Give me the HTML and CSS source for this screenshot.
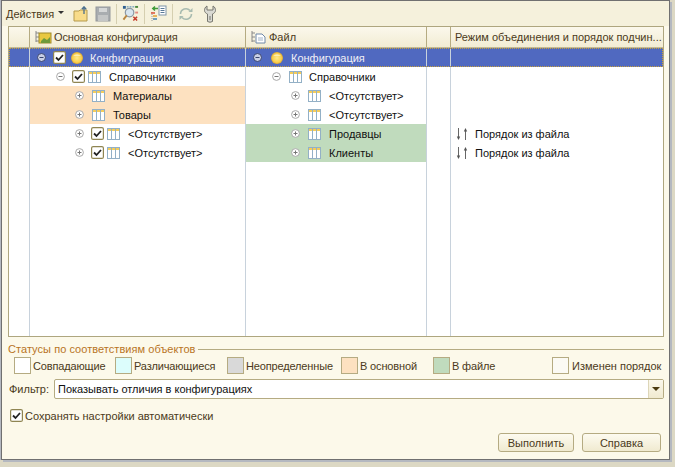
FILE: index.html
```html
<!DOCTYPE html>
<html>
<head>
    <meta charset="UTF-8">
    <title>Объединение конфигураций</title>
    <link rel="stylesheet" href="styles.css">
</head>
<body>
    <svg class="defs" width="0" height="0">
        <defs>
            <radialGradient id="ballFill" cx="50%" cy="50%" r="56%">
                <stop offset="0" stop-color="#ffe98a"/>
                <stop offset="0.65" stop-color="#f9cf4e"/>
                <stop offset="1" stop-color="#cf9226"/>
            </radialGradient>
            <symbol id="i-table" viewBox="0 0 13 12">
                <rect x="0.5" y="0.5" width="12" height="11" fill="#fff" stroke="#93b0c6"/>
                <rect x="1" y="1" width="11" height="2" fill="#f5cd5a"/>
                <path d="M4.5 1v10M8.5 1v10" stroke="#93b0c6" fill="none"/>
            </symbol>
            <symbol id="i-ball" viewBox="0 0 12 12">
                <circle cx="6" cy="6" r="6" fill="url(#ballFill)"/>
                <path d="M2.2 4a4.2 3 0 0 1 7.600 0z" fill="#fff" opacity="0.5"/>
            </symbol>
            <symbol id="i-plus" viewBox="0 0 9 9">
                <circle cx="4.5" cy="4.5" r="3.9" fill="#fff" stroke="#a8a8a8"/>
                <path d="M2.5 4.5h4M4.5 2.5v4" stroke="#777"/>
            </symbol>
            <symbol id="i-minus" viewBox="0 0 9 9">
                <circle cx="4.5" cy="4.5" r="3.9" fill="#fff" stroke="#a8a8a8"/>
                <path d="M2.5 4.5h4" stroke="#777"/>
            </symbol>
            <symbol id="i-minus-sel" viewBox="0 0 9 9">
                <circle cx="4.5" cy="4.5" r="4" fill="#c9cfe6" stroke="#39456f"/>
                <path d="M2.5 4.5h4" stroke="#39456f"/>
            </symbol>
            <symbol id="i-check" viewBox="0 0 13 13">
                <rect x="0.6" y="0.6" width="11.800" height="11.800" rx="1.5" fill="#fff" stroke="#8f8552" stroke-width="1.200"/>
                <path d="M3 6.500l2.500 2.500l4.500-5" fill="none" stroke="#222" stroke-width="1.800"/>
            </symbol>
            <symbol id="i-order" viewBox="0 0 12 12">
                <path d="M2.500 0v9" stroke="#666" fill="none"/>
                <path d="M0.800 8.500h3.400L2.500 12z" fill="#555"/>
                <path d="M9.500 12V3" stroke="#666" fill="none"/>
                <path d="M7.800 3.500h3.400L9.500 0z" fill="#555"/>
            </symbol>
        </defs>
    </svg>

    <div class="dialog">
        <div class="toolbar">
            <span class="menu">Действия</span>
            <span class="menu-arrow"></span>
            <!-- папка -->
            <svg class="tool tool-first" width="16" height="16" viewBox="0 0 16 16">
                <path d="M1 5h5l1-1h7v11H1z" fill="#f8dc8a" stroke="#b59a4c"/>
                <path d="M11 8V1M8.800 3.200L11 .8l2.200 2.400" fill="none" stroke="#4a6f8e" stroke-width="1.300"/>
            </svg>
            <!-- сохранить, неактивно -->
            <svg class="tool" width="16" height="16" viewBox="0 0 16 16">
                <rect x="1" y="1" width="14" height="14" fill="#a9adb0" stroke="#94989b"/>
                <rect x="4" y="2" width="8" height="4" fill="#d5d7d7"/>
                <rect x="3" y="9" width="10" height="6" fill="#c4c6c6"/>
            </svg>
            <span class="tool-sep"></span>
            <svg class="tool" width="17" height="17" viewBox="0 0 18 18">
                <path d="M2 2h14" stroke="#3f7fb0" stroke-dasharray="2 1"/>
                <rect x="1" y="1" width="3" height="3" fill="#2f5f90"/>
                <rect x="14" y="1" width="3" height="2" fill="#4d8a3c"/>
                <circle cx="8" cy="8" r="4.500" fill="#d8e6ef" stroke="#8b98a5" stroke-width="1.300"/>
                <path d="M5 11l-3.500 4.500" stroke="#b9863f" stroke-width="2"/>
                <path d="M12 12.500l4 4M16 12.500l-4 4" stroke="#c43a2a" stroke-width="1.600"/>
                <rect x="14" y="7" width="3" height="2" fill="#e08a80"/>
            </svg>
            <span class="tool-sep"></span>
            <svg class="tool" width="17" height="17" viewBox="0 0 17 17">
                <rect x="9" y="1" width="7" height="9" fill="#fff" stroke="#7f95a8"/>
                <path d="M10.500 3.500h4M10.500 5.500h4M10.500 7.500h4" stroke="#5a7a98"/>
                <path d="M8 3.500H3M5 1.500L2.800 3.500L5 5.500" fill="none" stroke="#3f9a3a" stroke-width="1.500"/>
                <path d="M2 7v9" stroke="#999" stroke-dasharray="1 1"/>
                <path d="M1 8h4" stroke="#d8503a" stroke-width="1.500"/>
                <path d="M3 11h4" stroke="#e0a030" stroke-width="1.500"/>
                <path d="M3 14h4" stroke="#3f7fb0" stroke-width="1.500"/>
            </svg>
            <span class="tool-sep"></span>
            <svg class="tool" width="16" height="16" viewBox="0 0 16 16">
                <path d="M2.500 8a5.500 5.500 0 0 1 9.500-3.500" fill="none" stroke="#a8bbb0" stroke-width="1.600"/>
                <path d="M13.500 8a5.500 5.500 0 0 1-9.500 3.500" fill="none" stroke="#a8bbb0" stroke-width="1.600"/>
                <path d="M10.500 6h4V2zM5.500 10h-4v4z" fill="#a8bbb0"/>
            </svg>
            <svg class="tool tool-wrench" width="12" height="18" viewBox="0 0 12 18">
                <path d="M3 1v4h6V1c2 1 2.500 3 2.500 4.500S10 8.500 8.500 9v7.500q-2.500 1.500-5 0V9C2 8.500.500 7 .500 5.500S1 2 3 1z" fill="#d9d9d2" stroke="#77776f"/>
                <path d="M6 11v4" stroke="#77776f"/>
            </svg>
        </div>

        <div class="tree">
            <div class="row row-head">
                <div class="cell"></div>
                <div class="cell head-main">
                    <svg class="head-icon" width="17" height="14" viewBox="0 0 17 14">
                        <path d="M1 1v11M1 3h3M1 7h3M1 11h3" stroke="#888" fill="none"/>
                        <rect x="4" y="3" width="12" height="10" fill="#e8c840" stroke="#a08a28"/>
                        <path d="M6 11l3-3l3 2l3-3v6H6z" fill="#6f9a3a"/>
                    </svg>
                    <span>Основная конфигурация</span>
                </div>
                <div class="cell head-file">
                    <svg class="head-icon" width="16" height="14" viewBox="0 0 16 14">
                        <path d="M1 1v11M1 3h3M1 7h3M1 11h3" stroke="#888" fill="none"/>
                        <path d="M5 4h6l3 3v6H5z" fill="#fff" stroke="#6f88a8"/>
                        <path d="M7 8h5M7 10h5" stroke="#9fb2c8"/>
                    </svg>
                    <span>Файл</span>
                </div>
                <div class="cell"></div>
                <div class="cell head-mode"><span>Режим объединения и порядок подчин...</span></div>
            </div>

            <div class="rows">
                <div class="row row-selected">
                    <div class="cell"></div>
                    <div class="cell lvl-0">
                        <svg class="exp"><use href="#i-minus-sel"/></svg>
                        <svg class="chk"><use href="#i-check"/></svg>
                        <svg class="ball"><use href="#i-ball"/></svg>
                        <span class="name">Конфигурация</span>
                    </div>
                    <div class="cell lvl-f0">
                        <svg class="exp"><use href="#i-minus-sel"/></svg>
                        <svg class="ball"><use href="#i-ball"/></svg>
                        <span class="name">Конфигурация</span>
                    </div>
                    <div class="cell"></div>
                    <div class="cell"></div>
                </div>

                <div class="row">
                    <div class="cell"></div>
                    <div class="cell lvl-1">
                        <svg class="exp"><use href="#i-minus"/></svg>
                        <svg class="chk"><use href="#i-check"/></svg>
                        <svg class="tbl"><use href="#i-table"/></svg>
                        <span class="name">Справочники</span>
                    </div>
                    <div class="cell lvl-f1">
                        <svg class="exp"><use href="#i-minus"/></svg>
                        <svg class="tbl"><use href="#i-table"/></svg>
                        <span class="name">Справочники</span>
                    </div>
                    <div class="cell"></div>
                    <div class="cell"></div>
                </div>

                <div class="row">
                    <div class="cell"></div>
                    <div class="cell lvl-2 bg-main">
                        <svg class="exp"><use href="#i-plus"/></svg>
                        <svg class="tbl"><use href="#i-table"/></svg>
                        <span class="name">Материалы</span>
                    </div>
                    <div class="cell lvl-f2">
                        <svg class="exp"><use href="#i-plus"/></svg>
                        <svg class="tbl"><use href="#i-table"/></svg>
                        <span class="name">&lt;Отсутствует&gt;</span>
                    </div>
                    <div class="cell"></div>
                    <div class="cell"></div>
                </div>

                <div class="row">
                    <div class="cell"></div>
                    <div class="cell lvl-2 bg-main">
                        <svg class="exp"><use href="#i-plus"/></svg>
                        <svg class="tbl"><use href="#i-table"/></svg>
                        <span class="name">Товары</span>
                    </div>
                    <div class="cell lvl-f2">
                        <svg class="exp"><use href="#i-plus"/></svg>
                        <svg class="tbl"><use href="#i-table"/></svg>
                        <span class="name">&lt;Отсутствует&gt;</span>
                    </div>
                    <div class="cell"></div>
                    <div class="cell"></div>
                </div>

                <div class="row">
                    <div class="cell"></div>
                    <div class="cell lvl-2">
                        <svg class="exp"><use href="#i-plus"/></svg>
                        <svg class="chk"><use href="#i-check"/></svg>
                        <svg class="tbl"><use href="#i-table"/></svg>
                        <span class="name">&lt;Отсутствует&gt;</span>
                    </div>
                    <div class="cell lvl-f2 bg-file">
                        <svg class="exp"><use href="#i-plus"/></svg>
                        <svg class="tbl"><use href="#i-table"/></svg>
                        <span class="name">Продавцы</span>
                    </div>
                    <div class="cell"></div>
                    <div class="cell order">
                        <svg class="ord"><use href="#i-order"/></svg>
                        <span>Порядок из файла</span>
                    </div>
                </div>

                <div class="row">
                    <div class="cell"></div>
                    <div class="cell lvl-2">
                        <svg class="exp"><use href="#i-plus"/></svg>
                        <svg class="chk"><use href="#i-check"/></svg>
                        <svg class="tbl"><use href="#i-table"/></svg>
                        <span class="name">&lt;Отсутствует&gt;</span>
                    </div>
                    <div class="cell lvl-f2 bg-file">
                        <svg class="exp"><use href="#i-plus"/></svg>
                        <svg class="tbl"><use href="#i-table"/></svg>
                        <span class="name">Клиенты</span>
                    </div>
                    <div class="cell"></div>
                    <div class="cell order">
                        <svg class="ord"><use href="#i-order"/></svg>
                        <span>Порядок из файла</span>
                    </div>
                </div>

                <div class="row row-fill">
                    <div class="cell"></div>
                    <div class="cell"></div>
                    <div class="cell"></div>
                    <div class="cell"></div>
                    <div class="cell"></div>
                </div>
            </div>
        </div>

        <div class="legend-title">
            <span>Статусы по соответствиям объектов</span>
            <i></i>
        </div>
        <div class="legend">
            <div class="item"><b class="sw sw-same"></b>Совпадающие</div>
            <div class="item"><b class="sw sw-diff"></b>Различающиеся</div>
            <div class="item"><b class="sw sw-undef"></b>Неопределенные</div>
            <div class="item"><b class="sw sw-main"></b>В основной</div>
            <div class="item"><b class="sw sw-file"></b>В файле</div>
            <div class="item"><b class="sw sw-order"></b>Изменен порядок</div>
        </div>

        <div class="filter">
            <label>Фильтр:</label>
            <div class="select">
                <span>Показывать отличия в конфигурациях</span>
                <div class="select-btn"><i></i></div>
            </div>
        </div>

        <div class="autosave">
            <svg class="chk"><use href="#i-check"/></svg>
            <span>Сохранять настройки автоматически</span>
        </div>

        <div class="buttons">
            <button class="btn btn-run">Выполнить</button>
            <button class="btn btn-help">Справка</button>
        </div>
    </div>
</body>
</html>
```

FILE: styles.css
```css
* { box-sizing: border-box; }
html, body { margin: 0; height: 467px; overflow: hidden; }
body {
    background: #dcd8c4;
    font-family: "Liberation Sans", Arial, sans-serif;
    font-size: 11px;
    color: #222;
}
.defs { display: block; height: 0; }

.dialog {
    width: 669px;
    height: 460px;
    margin-left: 1px;
    background: #fcf9ea;
    border: 1px solid #707070;
    box-shadow: -1px 0 0 #b4b8c0, 2px 2px 0 #b4b8c0;
    display: flex;
    flex-direction: column;
}

/* панель команд */
.toolbar {
    height: 25px;
    background: #f5f1dc;
    display: flex;
    align-items: center;
    padding-left: 4px;
    color: #4b3a20;
}
.menu-arrow {
    width: 0; height: 0;
    margin: -2px 0 0 4px;
    border: 3px solid transparent;
    border-top: 3px solid #333;
    border-bottom: 0;
}
.tool { margin-left: 6px; flex: none; }
.tool-first { margin-left: 9px; }
.tool-sep { width: 1px; height: 20px; background: #d5cfb0; margin-left: 5px; flex: none; }
.tool-sep + .tool { margin-left: 5px; }
.tool-wrench { margin-left: 10px; }

/* дерево */
.tree {
    margin: 0 5px 0 6px;
    height: 311px;
    border: 1px solid #aea67f;
    background: #fff;
    display: flex;
    flex-direction: column;
    flex: none;
}
.row {
    display: grid;
    grid-template-columns: 21px 216px 181px 24px 1fr;
    height: 19px;
}
.cell {
    border-right: 1px solid #c8d2dc;
    display: flex;
    align-items: center;
    white-space: nowrap;
    color: #111;
}
.cell:last-child { border-right: 0; }
.rows { flex: 1; display: flex; flex-direction: column; }
.row-fill { flex: 1; }

.row-head {
    height: 21px;
    background: linear-gradient(#fbf8ec, #f2ecd3);
    border-bottom: 1px solid #c4bb94;
}
.row-head .cell { border-right-color: #b5ab82; color: #4b3a20; }
.head-main { padding-left: 5px; letter-spacing: -0.1px; }
.head-file { padding-left: 5px; }
.head-mode { padding-left: 4px; }
.head-icon { margin-right: 2px; }

.row-selected {
    background: #5069c0;
    outline: 1px dotted #c9a13b;
    outline-offset: -1px;
}
.row-selected .cell { border-right-color: #c8d2dc; color: #f0f0f5; }

.exp { width: 9px; height: 9px; flex: none; }
.chk { width: 13px; height: 13px; flex: none; margin-left: 7px; }
.tbl { width: 13px; height: 12px; flex: none; margin-left: 3px; }
.ball { width: 12px; height: 12px; flex: none; margin-left: 5px; }
.name { margin-left: 8px; }

.lvl-0 { padding-left: 7px; }
.lvl-1 { padding-left: 26px; }
.lvl-2 { padding-left: 45px; }
.lvl-f0 { padding-left: 7px; }
.lvl-f1 { padding-left: 26px; }
.lvl-f2 { padding-left: 45px; }
.lvl-0 .name { margin-left: 7px; }
.lvl-f0 .ball { margin-left: 9px; }
.lvl-f1 .name { margin-left: 7px; }
.lvl-f1 .tbl, .lvl-f2 .tbl, .lvl-2 > .exp + .tbl { margin-left: 8px; }

.bg-main { background: #fde1c0; }
.bg-file { background: #c0dbbd; }
.order { padding-left: 5px; }
.ord { width: 12px; height: 12px; margin-right: 7px; flex: none; }

/* статусы */
.legend-title {
    margin: 6px 5px 0 6px;
    display: flex;
    align-items: center;
    color: #b8741f;
    letter-spacing: 0.05px;
}
.legend-title i { flex: 1; height: 1px; background: #b5ab82; margin-left: 2px; }
.legend {
    margin: 2px 0 0 12px;
    display: grid;
    grid-template-columns: 101px 112px 114px 92px 119px auto;
    letter-spacing: -0.15px;
}
.item { display: flex; align-items: center; height: 17px; color: #4b3a20; white-space: nowrap; }
.item:last-child { letter-spacing: 0; }
.sw {
    width: 17px; height: 17px;
    border: 1px solid #b5ab82;
    margin-right: 2px;
    flex: none;
}
.sw-same { background: #fff; }
.sw-diff { background: #dcfdfc; }
.sw-undef { background: #d9d9d9; }
.sw-main { background: #fde1c0; }
.sw-file { background: #c0dbbd; }
.sw-order { background: #fbfaf4; margin-right: 3px; }

/* фильтр */
.filter {
    margin: 5px 5px 0 7px;
    display: flex;
    align-items: center;
    color: #4b3a20;
}
.filter label { width: 45px; }
.select {
    flex: 1;
    height: 20px;
    background: #fff;
    border: 1px solid #b5ab82;
    border-radius: 2px;
    display: flex;
    align-items: center;
    padding-left: 3px;
    color: #111;
}
.select span { flex: 1; }
.select-btn {
    width: 15px;
    height: 18px;
    background: linear-gradient(#fbf8ec, #f0ead0);
    border-left: 1px solid #ddd6b8;
    display: flex;
    align-items: center;
    justify-content: center;
}
.select-btn i {
    width: 0; height: 0;
    border: 4px solid transparent;
    border-top: 4px solid #4b3a10;
    border-bottom: 0;
}

.autosave {
    margin: 10px 0 0 8px;
    display: flex;
    align-items: center;
    color: #4b3a20;
}
.autosave .chk { margin-left: 0; margin-right: 2px; }

.buttons {
    margin: 11px 0 0 496px;
    display: flex;
    gap: 8px;
}
.btn {
    height: 19px;
    padding: 0;
    font: inherit;
    color: #4b3a20;
    background: linear-gradient(#fdfbf0, #f0ead0);
    border: 1px solid #b5ab82;
    border-radius: 3px;
}
.btn-run { width: 76px; }
.btn-help { width: 79px; }
```
